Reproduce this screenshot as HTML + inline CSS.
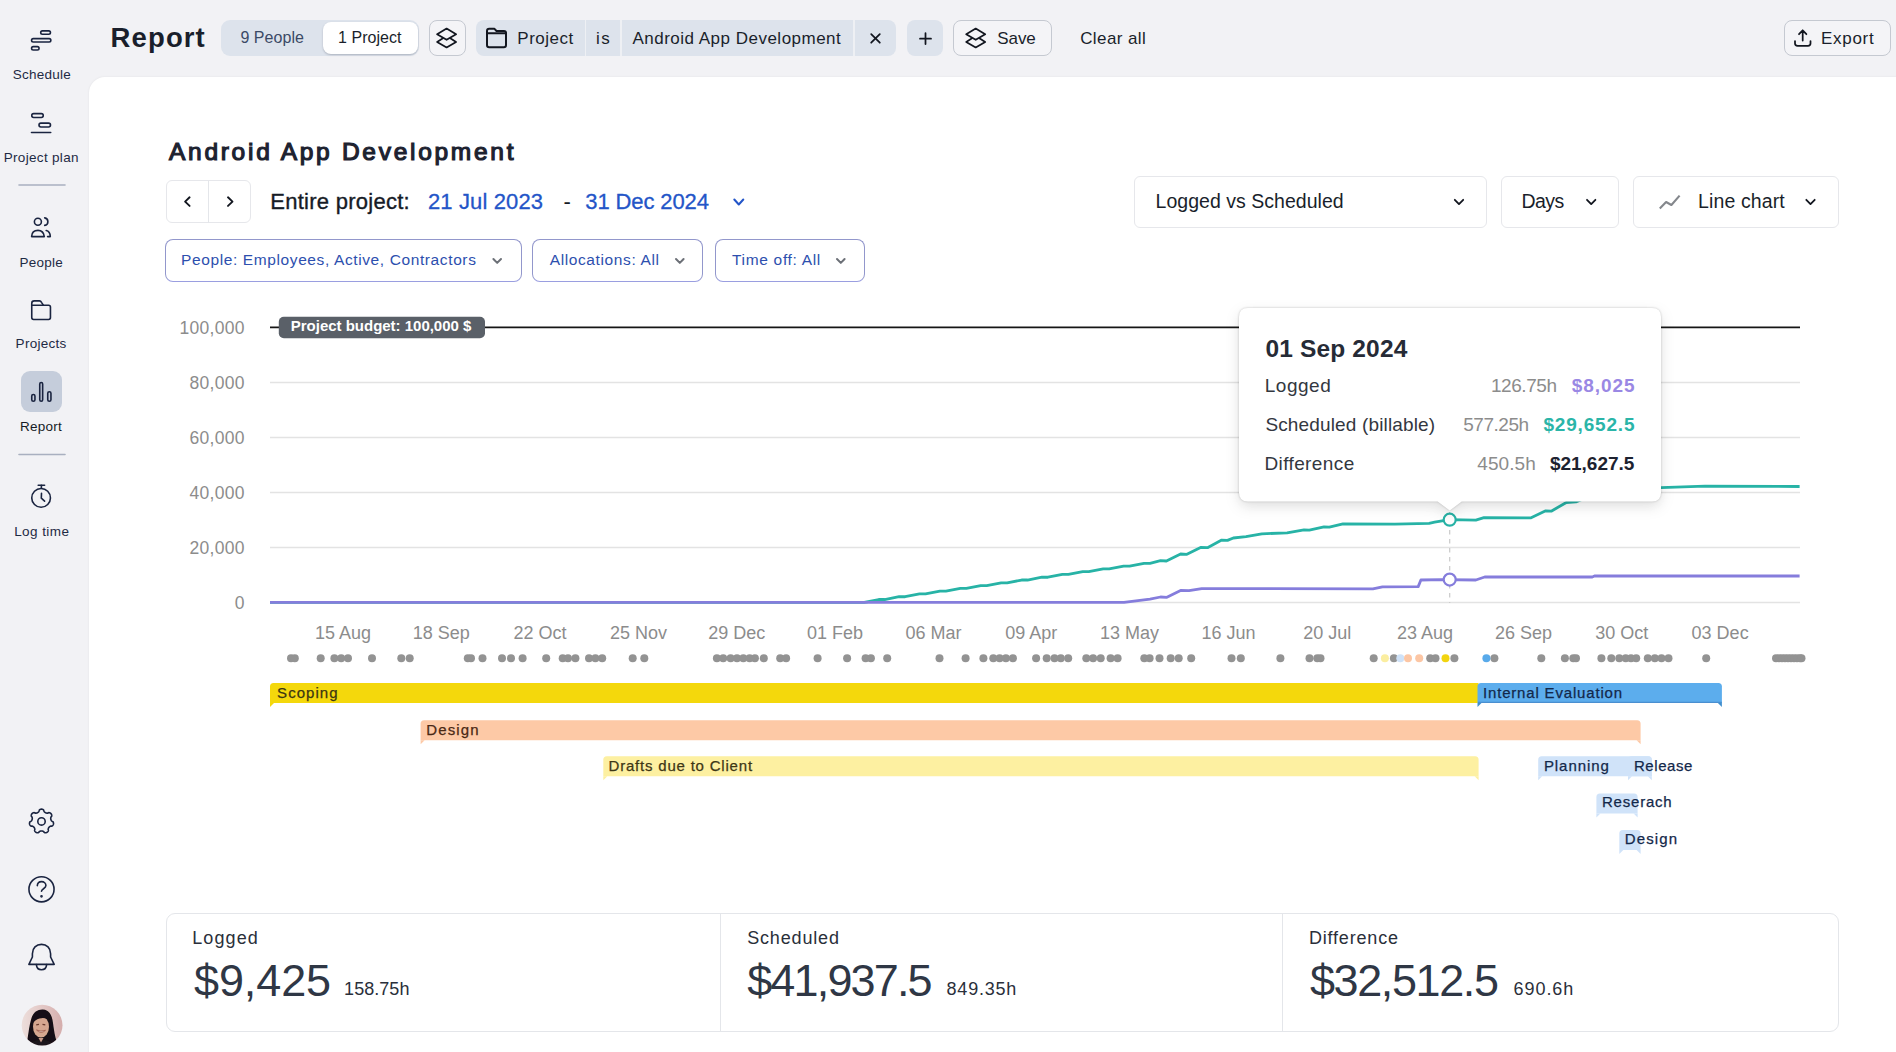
<!DOCTYPE html>
<html><head><meta charset="utf-8">
<style>
*{box-sizing:border-box;margin:0;padding:0}
html,body{width:1896px;height:1052px;overflow:hidden;background:#f2f2f5;font-family:"Liberation Sans",sans-serif;color:#1f2430}
.a{position:absolute}
.t{position:absolute;line-height:1;white-space:nowrap}
svg{position:absolute;overflow:visible}
#panel{position:absolute;left:88.5px;top:77px;width:1808px;height:976px;background:#fff;border-top-left-radius:16px;box-shadow:0 0 2.5px rgba(0,0,0,0.07)}
.box{position:absolute;border:1.2px solid #e6e7eb;border-radius:6px;background:#fff}
.fp{position:absolute;border:1.3px solid #9297cc;border-bottom-color:#9a9ee0;border-radius:8px;background:#fff;top:239px;height:42.5px}
</style></head><body>
<div id="panel"></div>

<!-- SIDEBAR ICONS -->
<div class="a" style="left:21.2px;top:371.4px;width:40.6px;height:41.1px;border-radius:9px;background:#c5cddb"></div>
<svg style="left:0;top:0" width="88" height="1052" fill="none" stroke="#1a2440" stroke-width="1.6" stroke-linecap="round" stroke-linejoin="round">
  <!-- schedule -->
  <rect x="40.7" y="30.85" width="9.75" height="3.4" rx="1.7"/>
  <rect x="31.55" y="38.65" width="19.3" height="3.4" rx="1.7"/>
  <rect x="31.55" y="46.65" width="7.5" height="3.4" rx="1.7"/>
  <!-- project plan -->
  <rect x="31.75" y="113.6" width="11.5" height="3.9" rx="1.9"/>
  <rect x="39" y="123.1" width="11.5" height="3.9" rx="1.9"/>
  <line x1="31.5" y1="132.5" x2="50.7" y2="132.5"/>
  <line x1="19" y1="185" x2="65" y2="185" stroke="#a9b0c0" stroke-width="1.6"/>
  <!-- people -->
  <circle cx="37.9" cy="221.7" r="3.5"/>
  <path d="M44.7 217.9 A3.8 3.8 0 0 1 44.7 225.4"/>
  <path d="M31.6 236.6 C31.8 232.5 34.5 230.4 38 230.4 C41.3 230.4 43.8 232.6 44.3 236.6 Z"/>
  <path d="M46.2 230.5 C48.8 231 50.2 233.2 50.3 236.6 L47.6 236.6"/>
  <!-- projects folder -->
  <path d="M31.75 303.4 L31.75 317.6 Q31.75 319.45 33.6 319.45 L48.6 319.45 Q50.45 319.45 50.45 317.6 L50.45 307.1 Q50.45 305.2 48.6 305.2 L43.3 305.2 L41.5 302.3 Q40.8 300.9 39.4 300.9 L34.2 300.9 Q31.75 300.9 31.75 303.4 Z"/>
  <line x1="31.75" y1="305.2" x2="43.3" y2="305.2"/>
  <!-- report bars -->
  <rect x="31.75" y="394.5" width="3.2" height="6.8" rx="1.6"/>
  <rect x="39.75" y="382.45" width="2.9" height="18.85" rx="1.45"/>
  <rect x="47.75" y="391.75" width="3.2" height="9.55" rx="1.6"/>
  <line x1="19" y1="454.5" x2="65" y2="454.5" stroke="#a9b0c0" stroke-width="1.6"/>
  <!-- log time -->
  <circle cx="41.1" cy="497.9" r="9.35"/>
  <line x1="38.2" y1="485.3" x2="44.6" y2="485.3"/>
  <line x1="41.4" y1="485.3" x2="41.4" y2="488.3"/>
  <path d="M41.5 493.3 L41.3 498.2 L44.6 501.2"/>
  <!-- gear -->
  <path d="M41.50 809.15 L41.71 809.16 L41.93 809.18 L42.14 809.22 L42.35 809.27 L42.56 809.34 L42.76 809.42 L42.96 809.52 L43.15 809.64 L43.34 809.77 L43.52 809.93 L43.69 810.12 L43.85 810.36 L43.92 810.92 L44.03 811.27 L44.15 811.49 L44.29 811.68 L44.42 811.84 L44.56 811.99 L44.69 812.13 L44.83 812.25 L44.97 812.37 L45.11 812.47 L45.25 812.57 L45.39 812.66 L45.54 812.74 L45.69 812.82 L45.84 812.88 L46.00 812.94 L46.16 812.99 L46.33 813.04 L46.50 813.08 L46.68 813.11 L46.87 813.14 L47.06 813.15 L47.27 813.16 L47.49 813.15 L47.73 813.13 L48.02 813.06 L48.53 812.72 L48.84 812.66 L49.10 812.66 L49.34 812.69 L49.57 812.74 L49.79 812.82 L50.00 812.90 L50.19 813.01 L50.38 813.12 L50.55 813.25 L50.72 813.38 L50.88 813.53 L51.02 813.69 L51.15 813.86 L51.27 814.04 L51.38 814.22 L51.48 814.41 L51.56 814.62 L51.63 814.82 L51.68 815.04 L51.72 815.26 L51.74 815.49 L51.74 815.73 L51.71 815.97 L51.65 816.23 L51.49 816.53 L51.06 816.94 L50.94 817.20 L50.86 817.43 L50.81 817.64 L50.77 817.84 L50.75 818.03 L50.73 818.22 L50.72 818.40 L50.72 818.58 L50.73 818.75 L50.75 818.92 L50.77 819.09 L50.81 819.25 L50.85 819.41 L50.89 819.57 L50.95 819.73 L51.01 819.89 L51.09 820.05 L51.17 820.21 L51.26 820.37 L51.37 820.54 L51.48 820.70 L51.62 820.87 L51.78 821.04 L51.97 821.22 L52.40 821.40 L52.82 821.60 L53.01 821.80 L53.15 822.01 L53.26 822.22 L53.35 822.44 L53.42 822.65 L53.47 822.87 L53.50 823.09 L53.52 823.30 L53.52 823.52 L53.51 823.73 L53.48 823.95 L53.44 824.16 L53.38 824.36 L53.31 824.56 L53.22 824.76 L53.12 824.95 L53.01 825.14 L52.88 825.32 L52.74 825.49 L52.58 825.65 L52.40 825.80 L52.20 825.94 L51.98 826.06 L51.70 826.16 L51.11 826.08 L50.78 826.13 L50.54 826.21 L50.33 826.29 L50.14 826.39 L49.97 826.49 L49.81 826.59 L49.66 826.70 L49.51 826.81 L49.38 826.92 L49.26 827.03 L49.14 827.16 L49.03 827.28 L48.92 827.41 L48.82 827.55 L48.73 827.69 L48.65 827.83 L48.56 827.99 L48.49 828.15 L48.42 828.32 L48.35 828.50 L48.29 828.69 L48.24 828.89 L48.20 829.11 L48.18 829.36 L48.19 829.66 L48.40 830.24 L48.39 830.54 L48.32 830.79 L48.23 831.02 L48.13 831.23 L48.01 831.42 L47.87 831.60 L47.73 831.77 L47.57 831.92 L47.41 832.06 L47.24 832.19 L47.06 832.31 L46.87 832.41 L46.68 832.50 L46.48 832.58 L46.27 832.64 L46.06 832.69 L45.85 832.72 L45.63 832.74 L45.40 832.74 L45.18 832.73 L44.95 832.69 L44.72 832.63 L44.49 832.55 L44.25 832.42 L43.98 832.16 L43.69 831.68 L43.47 831.52 L43.26 831.40 L43.07 831.30 L42.88 831.22 L42.70 831.16 L42.52 831.10 L42.34 831.05 L42.17 831.02 L42.00 830.99 L41.83 830.97 L41.67 830.95 L41.50 830.95 L41.33 830.95 L41.17 830.97 L41.00 830.99 L40.83 831.02 L40.66 831.05 L40.48 831.10 L40.30 831.16 L40.12 831.22 L39.93 831.30 L39.74 831.40 L39.53 831.52 L39.31 831.68 L39.02 832.16 L38.75 832.42 L38.51 832.55 L38.28 832.63 L38.05 832.69 L37.82 832.73 L37.60 832.74 L37.37 832.74 L37.15 832.72 L36.94 832.69 L36.73 832.64 L36.52 832.58 L36.32 832.50 L36.13 832.41 L35.94 832.31 L35.76 832.19 L35.59 832.06 L35.43 831.92 L35.27 831.77 L35.13 831.60 L34.99 831.42 L34.87 831.23 L34.77 831.02 L34.68 830.79 L34.61 830.54 L34.60 830.24 L34.81 829.66 L34.82 829.36 L34.80 829.11 L34.76 828.89 L34.71 828.69 L34.65 828.50 L34.58 828.32 L34.51 828.15 L34.44 827.99 L34.35 827.83 L34.27 827.69 L34.18 827.55 L34.08 827.41 L33.97 827.28 L33.86 827.16 L33.74 827.03 L33.62 826.92 L33.49 826.81 L33.34 826.70 L33.19 826.59 L33.03 826.49 L32.86 826.39 L32.67 826.29 L32.46 826.21 L32.22 826.13 L31.89 826.08 L31.30 826.16 L31.02 826.06 L30.80 825.94 L30.60 825.80 L30.42 825.65 L30.26 825.49 L30.12 825.32 L29.99 825.14 L29.88 824.95 L29.78 824.76 L29.69 824.56 L29.62 824.36 L29.56 824.16 L29.52 823.95 L29.49 823.73 L29.48 823.52 L29.48 823.30 L29.50 823.09 L29.53 822.87 L29.58 822.65 L29.65 822.44 L29.74 822.22 L29.85 822.01 L29.99 821.80 L30.18 821.60 L30.60 821.40 L31.03 821.22 L31.22 821.04 L31.38 820.87 L31.52 820.70 L31.63 820.54 L31.74 820.37 L31.83 820.21 L31.91 820.05 L31.99 819.89 L32.05 819.73 L32.11 819.57 L32.15 819.41 L32.19 819.25 L32.23 819.09 L32.25 818.92 L32.27 818.75 L32.28 818.58 L32.28 818.40 L32.27 818.22 L32.25 818.03 L32.23 817.84 L32.19 817.64 L32.14 817.43 L32.06 817.20 L31.94 816.94 L31.51 816.53 L31.35 816.23 L31.29 815.97 L31.26 815.73 L31.26 815.49 L31.28 815.26 L31.32 815.04 L31.37 814.82 L31.44 814.62 L31.52 814.41 L31.62 814.22 L31.73 814.04 L31.85 813.86 L31.98 813.69 L32.12 813.53 L32.28 813.38 L32.45 813.25 L32.62 813.12 L32.81 813.01 L33.00 812.90 L33.21 812.82 L33.43 812.74 L33.66 812.69 L33.90 812.66 L34.16 812.66 L34.47 812.72 L34.98 813.06 L35.27 813.13 L35.51 813.15 L35.73 813.16 L35.94 813.15 L36.13 813.14 L36.32 813.11 L36.50 813.08 L36.67 813.04 L36.84 812.99 L37.00 812.94 L37.16 812.88 L37.31 812.82 L37.46 812.74 L37.61 812.66 L37.75 812.57 L37.89 812.47 L38.03 812.37 L38.17 812.25 L38.31 812.13 L38.44 811.99 L38.58 811.84 L38.71 811.68 L38.85 811.49 L38.97 811.27 L39.08 810.92 L39.15 810.36 L39.31 810.12 L39.48 809.93 L39.66 809.77 L39.85 809.64 L40.04 809.52 L40.24 809.42 L40.44 809.34 L40.65 809.27 L40.86 809.22 L41.07 809.18 L41.29 809.16 L41.50 809.15 Z"/>
  <circle cx="41.5" cy="821.4" r="3.7"/>
  <!-- help -->
  <circle cx="41.5" cy="889.3" r="12.55"/>
  <path d="M37.3 885.6 C37.5 883 39.3 881.6 41.6 881.6 C44.1 881.6 45.9 883.3 45.9 885.5 C45.9 888.5 41.5 888.9 41.5 891.3"/>
  <circle cx="41.5" cy="896.3" r="0.55" fill="#1a2440"/>
  <!-- bell -->
  <path d="M28.9 964.4 L32.4 957 L32.4 953.7 C32.4 948 36.3 944.4 41.5 944.4 C46.7 944.4 50.6 948 50.6 953.7 L50.6 957 L54.2 964.4 Z"/>
  <path d="M36.4 964.6 C36.6 967.9 38.8 969.7 41.5 969.7 C44.2 969.7 46.4 967.9 46.6 964.6"/>
</svg>
<!-- avatar -->
<svg style="left:20.7px;top:1004.3px" width="42" height="42" viewBox="0 0 42 42">
  <defs><clipPath id="av"><circle cx="21.1" cy="21.2" r="20.4"/></clipPath>
  <linearGradient id="avbg" x1="0" y1="0" x2="1" y2="0"><stop offset="0" stop-color="#eddfdc"/><stop offset="0.55" stop-color="#e2c6c4"/><stop offset="1" stop-color="#d4acab"/></linearGradient>
  <filter id="avb"><feGaussianBlur stdDeviation="0.45"/></filter></defs>
  <g clip-path="url(#av)">
    <rect width="42" height="42" fill="url(#avbg)"/>
    <g filter="url(#avb)">
    <path d="M5.5 42 C7 33 8 22 10.5 14 C12.5 8 17 5.2 22 5.5 C27.5 6 30.5 10 31.5 16 C33 25 33.5 33 37.5 42 Z" fill="#141013"/>
    <ellipse cx="20" cy="22.8" rx="8" ry="10.8" fill="#d6a690"/>
    <path d="M11.5 19.5 C12.5 12.5 16.5 9.5 21 9.8 C25.5 10.2 28.3 13 28.8 17.5 C26.5 14.5 23 13.2 18.5 14.6 C15.5 15.6 13 17.2 11.5 19.5 Z" fill="#141013"/>
    <path d="M28 15 C29.5 22 29 30 27 36 L32 40 C31 32 30.5 22 28 15 Z" fill="#141013"/>
    <path d="M15.2 20.8 L18 20.3 M21.5 20.3 L24.3 20.8" stroke="#6a3a2e" stroke-width="1.2"/>
    <path d="M15.5 26 Q20 30.5 24.5 26.3 Q20 28 15.5 26 Z" fill="#f2e4de" stroke="#9a5446" stroke-width="0.8"/>
    <path d="M8 42 C11 37.5 15 36 20 36 C26 36 30 37.5 34 42 Z" fill="#1d171a"/>
    <path d="M17.5 34 L20 38.5 L22.5 34 Z" fill="#c89888"/>
    </g>
  </g>
</svg>

<!-- HEADER SHAPES -->
<div class="a" style="left:221.2px;top:20.3px;width:198px;height:35.5px;border-radius:9px;background:#dde3ec"></div>
<div class="a" style="left:322.7px;top:22px;width:95.5px;height:32px;border-radius:8px;background:#fff;box-shadow:0 1px 2px rgba(30,40,60,0.25)"></div>
<div class="a" style="left:429px;top:20.3px;width:36.5px;height:35.5px;border-radius:8px;border:1px solid #c5c9d1;background:#f4f4f7"></div>
<svg style="left:0;top:0" width="1896" height="80" fill="none" stroke="#12161f" stroke-width="2" stroke-linejoin="round">
  <g transform="translate(446.6,0)" stroke-width="1.75">
    <path d="M0 28.6 L9.5 34.2 L0 39.8 L-9.5 34.2 Z"/>
    <path d="M-3.3 38.1 L-9.5 41.9 L0 47.4 L9.5 41.9 L3.3 38.1"/>
  </g>
</svg>
<!-- filter chip -->
<div class="a" style="left:476.2px;top:20.3px;width:420px;height:35.4px;border-radius:8px;background:#dde3ec"></div>
<div class="a" style="left:584.6px;top:20.3px;width:1.8px;height:35.4px;background:#eef0f4"></div>
<div class="a" style="left:620.2px;top:20.3px;width:1.8px;height:35.4px;background:#eef0f4"></div>
<div class="a" style="left:853px;top:20.3px;width:1.8px;height:35.4px;background:#eef0f4"></div>
<svg style="left:0;top:0" width="1896" height="80" fill="none" stroke="#12161f" stroke-width="2" stroke-linejoin="round" stroke-linecap="round">
  <!-- folder -->
  <path d="M487 31 Q487 28.8 489.2 28.8 L494.5 28.8 L496.5 31 L504 31 Q506 31 506 33 L506 45 Q506 47.2 503.8 47.2 L489.2 47.2 Q487 47.2 487 45 Z"/>
  <line x1="487" y1="33.2" x2="506" y2="33.2"/>
  <!-- x -->
  <path d="M871.2 34.1 L879.8 42.7 M879.8 34.1 L871.2 42.7" stroke-width="1.75"/>
  </svg>
<div class="a" style="left:907.2px;top:20.3px;width:36px;height:35.4px;border-radius:8px;background:#dde3ec"></div>
<svg style="left:0;top:0" width="1896" height="80" fill="none" stroke="#12161f" stroke-width="2" stroke-linejoin="round" stroke-linecap="round">
  <path d="M925.5 33.2 L925.5 44.1 M920 38.65 L931 38.65" stroke-width="1.75"/>
</svg>
<div class="a" style="left:953.3px;top:20.3px;width:98.5px;height:35.5px;border-radius:8px;border:1px solid #c5c9d1;background:#f4f4f7"></div>
<svg style="left:0;top:0" width="1896" height="80" fill="none" stroke="#12161f" stroke-width="2" stroke-linejoin="round">
  <g transform="translate(975.7,0)" stroke-width="1.75">
    <path d="M0 28.6 L9.5 34.2 L0 39.8 L-9.5 34.2 Z"/>
    <path d="M-3.3 38.1 L-9.5 41.9 L0 47.4 L9.5 41.9 L3.3 38.1"/>
  </g>
</svg>
<!-- export -->
<div class="a" style="left:1784.2px;top:20.3px;width:106.5px;height:35.5px;border-radius:8px;border:1px solid #c5c9d1;background:#f4f4f7"></div>
<svg style="left:0;top:0" width="1896" height="80" fill="none" stroke="#12161f" stroke-width="2" stroke-linejoin="round" stroke-linecap="round">
  <path d="M1802.7 30.3 L1802.7 40.6 M1799 34.2 L1802.7 30.3 L1806.4 34.2" stroke-width="1.75"/>
  <path d="M1795 41 L1795 43.6 Q1795 45.8 1797.6 45.8 L1808 45.8 Q1810.5 45.8 1810.5 43.6 L1810.5 41" stroke-width="1.75"/>
</svg>

<!-- MAIN CONTROLS -->
<div class="box" style="left:166.3px;top:180px;width:85.2px;height:43.3px"></div>
<div class="a" style="left:208px;top:180.5px;width:1.2px;height:42.5px;background:#e4e6ea"></div>
<svg style="left:0;top:0" width="1896" height="300" fill="none" stroke="#12161f" stroke-width="2" stroke-linejoin="round" stroke-linecap="round">
  <path d="M189.6 197.3 L185.1 201.6 L189.6 205.9" stroke-width="1.9"/>
  <path d="M228 197.3 L232.5 201.6 L228 205.9" stroke-width="1.9"/>
  <path d="M734.3 199.5 L738.8 204.5 L743.3 199.5" stroke="#2355c8"/>
</svg>
<div class="box" style="left:1134.3px;top:175.5px;width:352.5px;height:52px"></div>
<div class="box" style="left:1501px;top:175.5px;width:118.3px;height:52px"></div>
<div class="box" style="left:1633px;top:175.5px;width:206px;height:52px"></div>
<svg style="left:0;top:0" width="1896" height="300" fill="none" stroke="#12161f" stroke-width="2" stroke-linejoin="round" stroke-linecap="round">
  <path d="M1454.8 199.8 L1459 204.1 L1463.2 199.8" stroke-width="1.8"/>
  <path d="M1587 199.8 L1591.2 204.1 L1595.4 199.8" stroke-width="1.8"/>
  <path d="M1806.3 199.8 L1810.5 204.1 L1814.7 199.8" stroke-width="1.8"/>
  <path d="M1659.8 208.5 L1666.1 202 L1671.4 205 L1679.6 195.6" stroke="#84878c" stroke-width="2.1" stroke-linecap="butt"/>
</svg>
<div class="fp" style="left:165.4px;width:356.4px"></div>
<div class="fp" style="left:532.4px;width:171px"></div>
<div class="fp" style="left:714.8px;width:150px"></div>
<svg style="left:0;top:0" width="1896" height="300" fill="none" stroke="#6c7077" stroke-width="2" stroke-linejoin="round" stroke-linecap="round">
  <path d="M493.4 259 L497.2 262.9 L501 259"/>
  <path d="M676 259 L679.8 262.9 L683.6 259"/>
  <path d="M837 259 L840.8 262.9 L844.6 259"/>
</svg>

<svg style="left:0;top:0" width="1896" height="900">
<line x1="270" y1="382.5" x2="1800" y2="382.5" stroke="#e3e3e3" stroke-width="1.5"/>
<line x1="270" y1="437.5" x2="1800" y2="437.5" stroke="#e3e3e3" stroke-width="1.5"/>
<line x1="270" y1="492.5" x2="1800" y2="492.5" stroke="#e3e3e3" stroke-width="1.5"/>
<line x1="270" y1="547.5" x2="1800" y2="547.5" stroke="#e3e3e3" stroke-width="1.5"/>
<line x1="270" y1="602.5" x2="1800" y2="602.5" stroke="#e3e3e3" stroke-width="1.5"/>
<line x1="270" y1="327.3" x2="1800" y2="327.3" stroke="#161616" stroke-width="1.8"/>
<rect x="278.8" y="316.8" width="206.2" height="21.5" rx="5" fill="#5a6068"/>
<line x1="1449.7" y1="512" x2="1449.7" y2="603" stroke="#c9c9c9" stroke-width="1.2" stroke-dasharray="4.5 4.5"/>
<polyline points="270,602.3 864.3,602.3 878.71,599.51 884.71,599.51 899.11,596.73 905.11,596.73 919.52,593.94 925.52,593.94 939.93,591.16 945.93,591.16 960.34,588.37 966.34,588.37 980.74,585.59 986.74,585.59 1001.15,582.8 1007.15,582.8 1021.56,580.01 1027.56,580.01 1041.96,577.23 1047.96,577.23 1062.37,574.44 1068.37,574.44 1082.78,571.66 1088.78,571.66 1103.19,568.87 1109.19,568.87 1123.59,566.09 1129.59,566.09 1144.0,563.3 1150.0,563.3 1160.5,560.7 1166.4,561 1180.6,554 1186.9,554.3 1200.6,547.5 1207.5,547.7 1221.7,540.1 1227.5,540.4 1233.3,538 1246,536.7 1261.8,533.8 1287.1,532.9 1304,529.9 1309.3,530.1 1324,526.9 1329.3,527.2 1343,523.8 1394.9,524.1 1429.1,523.4 1434.6,522.2 1449.7,519.7 1475.8,520.1 1484,517.6 1530.6,517.9 1545.7,510.8 1551.2,511.2 1566.3,502.5 1575.9,501.9 1600,492 1661.2,487.6 1705,486.1 1799.6,486.5" fill="none" stroke="#27b3a6" stroke-width="2.8" stroke-linejoin="round"/>
<polyline points="270,602.3 1124,602.3 1150,599.2 1160.5,597 1166.9,597.3 1180.6,590.5 1189,590.7 1201.7,588.6 1372.9,588.9 1382.5,586.9 1418.2,586.6 1420.9,580 1441.5,579.6 1475.8,580 1484.7,577 1592.3,577 1595,575.8 1799.6,576" fill="none" stroke="#857ddc" stroke-width="2.8" stroke-linejoin="round"/>
<circle cx="1449.7" cy="519.7" r="6" fill="#fff" stroke="#27b3a6" stroke-width="2.2"/>
<circle cx="1449.7" cy="579.6" r="6" fill="#fff" stroke="#857ddc" stroke-width="2.2"/>
<circle cx="291" cy="658.3" r="4" fill="#939393"/>
<circle cx="294.8" cy="658.3" r="4" fill="#939393"/>
<circle cx="320.7" cy="658.3" r="4" fill="#939393"/>
<circle cx="334.4" cy="658.3" r="4" fill="#939393"/>
<circle cx="341.2" cy="658.3" r="4" fill="#939393"/>
<circle cx="348" cy="658.3" r="4" fill="#939393"/>
<circle cx="372" cy="658.3" r="4" fill="#939393"/>
<circle cx="401.3" cy="658.3" r="4" fill="#939393"/>
<circle cx="409.7" cy="658.3" r="4" fill="#939393"/>
<circle cx="467.8" cy="658.3" r="4" fill="#939393"/>
<circle cx="471" cy="658.3" r="4" fill="#939393"/>
<circle cx="482.5" cy="658.3" r="4" fill="#939393"/>
<circle cx="502" cy="658.3" r="4" fill="#939393"/>
<circle cx="511" cy="658.3" r="4" fill="#939393"/>
<circle cx="522.6" cy="658.3" r="4" fill="#939393"/>
<circle cx="546.2" cy="658.3" r="4" fill="#939393"/>
<circle cx="562.7" cy="658.3" r="4" fill="#939393"/>
<circle cx="568" cy="658.3" r="4" fill="#939393"/>
<circle cx="575.4" cy="658.3" r="4" fill="#939393"/>
<circle cx="589" cy="658.3" r="4" fill="#939393"/>
<circle cx="595.4" cy="658.3" r="4" fill="#939393"/>
<circle cx="602.2" cy="658.3" r="4" fill="#939393"/>
<circle cx="632.7" cy="658.3" r="4" fill="#939393"/>
<circle cx="644.3" cy="658.3" r="4" fill="#939393"/>
<circle cx="716.9" cy="658.3" r="4" fill="#939393"/>
<circle cx="723.2" cy="658.3" r="4" fill="#939393"/>
<circle cx="730.6" cy="658.3" r="4" fill="#939393"/>
<circle cx="737" cy="658.3" r="4" fill="#939393"/>
<circle cx="743.3" cy="658.3" r="4" fill="#939393"/>
<circle cx="749.6" cy="658.3" r="4" fill="#939393"/>
<circle cx="754.9" cy="658.3" r="4" fill="#939393"/>
<circle cx="763.8" cy="658.3" r="4" fill="#939393"/>
<circle cx="780.2" cy="658.3" r="4" fill="#939393"/>
<circle cx="786.1" cy="658.3" r="4" fill="#939393"/>
<circle cx="817.6" cy="658.3" r="4" fill="#939393"/>
<circle cx="847.1" cy="658.3" r="4" fill="#939393"/>
<circle cx="865.6" cy="658.3" r="4" fill="#939393"/>
<circle cx="870.9" cy="658.3" r="4" fill="#939393"/>
<circle cx="887.2" cy="658.3" r="4" fill="#939393"/>
<circle cx="939.5" cy="658.3" r="4" fill="#939393"/>
<circle cx="965.6" cy="658.3" r="4" fill="#939393"/>
<circle cx="983.4" cy="658.3" r="4" fill="#939393"/>
<circle cx="993.3" cy="658.3" r="4" fill="#939393"/>
<circle cx="999.6" cy="658.3" r="4" fill="#939393"/>
<circle cx="1005.9" cy="658.3" r="4" fill="#939393"/>
<circle cx="1012.9" cy="658.3" r="4" fill="#939393"/>
<circle cx="1036.1" cy="658.3" r="4" fill="#939393"/>
<circle cx="1046.7" cy="658.3" r="4" fill="#939393"/>
<circle cx="1054.5" cy="658.3" r="4" fill="#939393"/>
<circle cx="1060.8" cy="658.3" r="4" fill="#939393"/>
<circle cx="1068.2" cy="658.3" r="4" fill="#939393"/>
<circle cx="1086.3" cy="658.3" r="4" fill="#939393"/>
<circle cx="1093.1" cy="658.3" r="4" fill="#939393"/>
<circle cx="1100.7" cy="658.3" r="4" fill="#939393"/>
<circle cx="1110.6" cy="658.3" r="4" fill="#939393"/>
<circle cx="1117.6" cy="658.3" r="4" fill="#939393"/>
<circle cx="1144.3" cy="658.3" r="4" fill="#939393"/>
<circle cx="1149.6" cy="658.3" r="4" fill="#939393"/>
<circle cx="1159.5" cy="658.3" r="4" fill="#939393"/>
<circle cx="1170.7" cy="658.3" r="4" fill="#939393"/>
<circle cx="1178.7" cy="658.3" r="4" fill="#939393"/>
<circle cx="1191.2" cy="658.3" r="4" fill="#939393"/>
<circle cx="1231.5" cy="658.3" r="4" fill="#939393"/>
<circle cx="1240.8" cy="658.3" r="4" fill="#939393"/>
<circle cx="1280.4" cy="658.3" r="4" fill="#939393"/>
<circle cx="1309.5" cy="658.3" r="4" fill="#939393"/>
<circle cx="1317.3" cy="658.3" r="4" fill="#939393"/>
<circle cx="1320.5" cy="658.3" r="4" fill="#939393"/>
<circle cx="1373.7" cy="658.3" r="4" fill="#939393"/>
<circle cx="1393.9" cy="658.3" r="4" fill="#939393"/>
<circle cx="1430.2" cy="658.3" r="4" fill="#939393"/>
<circle cx="1435.5" cy="658.3" r="4" fill="#939393"/>
<circle cx="1454.4" cy="658.3" r="4" fill="#939393"/>
<circle cx="1494.4" cy="658.3" r="4" fill="#939393"/>
<circle cx="1541.3" cy="658.3" r="4" fill="#939393"/>
<circle cx="1564.9" cy="658.3" r="4" fill="#939393"/>
<circle cx="1573.3" cy="658.3" r="4" fill="#939393"/>
<circle cx="1576" cy="658.3" r="4" fill="#939393"/>
<circle cx="1601.4" cy="658.3" r="4" fill="#939393"/>
<circle cx="1611.3" cy="658.3" r="4" fill="#939393"/>
<circle cx="1619.3" cy="658.3" r="4" fill="#939393"/>
<circle cx="1625.7" cy="658.3" r="4" fill="#939393"/>
<circle cx="1631" cy="658.3" r="4" fill="#939393"/>
<circle cx="1636.2" cy="658.3" r="4" fill="#939393"/>
<circle cx="1647.8" cy="658.3" r="4" fill="#939393"/>
<circle cx="1654.8" cy="658.3" r="4" fill="#939393"/>
<circle cx="1661.5" cy="658.3" r="4" fill="#939393"/>
<circle cx="1668.5" cy="658.3" r="4" fill="#939393"/>
<circle cx="1706.2" cy="658.3" r="4" fill="#939393"/>
<circle cx="1776" cy="658.3" r="4" fill="#939393"/>
<circle cx="1779" cy="658.3" r="4" fill="#939393"/>
<circle cx="1782" cy="658.3" r="4" fill="#939393"/>
<circle cx="1785" cy="658.3" r="4" fill="#939393"/>
<circle cx="1788" cy="658.3" r="4" fill="#939393"/>
<circle cx="1791" cy="658.3" r="4" fill="#939393"/>
<circle cx="1794" cy="658.3" r="4" fill="#939393"/>
<circle cx="1797" cy="658.3" r="4" fill="#939393"/>
<circle cx="1800" cy="658.3" r="4" fill="#939393"/>
<circle cx="1801.5" cy="658.3" r="4" fill="#939393"/>
<circle cx="1384.9" cy="658.3" r="4" fill="#fbeea0"/>
<circle cx="1400.3" cy="658.3" r="4" fill="#cfe2f8"/>
<circle cx="1408" cy="658.3" r="4" fill="#fcc6a4"/>
<circle cx="1419.2" cy="658.3" r="4" fill="#fcc6a4"/>
<circle cx="1445.5" cy="658.3" r="4" fill="#f2d40f"/>
<circle cx="1486.4" cy="658.3" r="4" fill="#58aaea"/>
<path d="M270 703 L270 686.5 Q270 683 273.5 683 L1478.5 683 Q1478.5 683 1478.5 683 L1478.5 703 Z" fill="#f4d80c"/><path d="M270 703 L274 703 L270 707 Z" fill="#f4d80c"/>
<path d="M1477.5 703 L1477.5 686.5 Q1477.5 683 1481.0 683 L1718.4 683 Q1721.9 683 1721.9 686.5 L1721.9 703 Z" fill="#5caded"/><path d="M1477.5 703 L1481.5 703 L1477.5 707 Z" fill="#3f8fce"/><path d="M1721.9 703 L1717.9 703 L1721.9 707 Z" fill="#3f8fce"/>
<line x1="1478" y1="702.4" x2="1721.9" y2="702.4" stroke="#4a8fd0" stroke-width="1.2"/>
<path d="M420.6 740.3 L420.6 723.8 Q420.6 720.3 424.1 720.3 L1637.1 720.3 Q1640.6 720.3 1640.6 723.8 L1640.6 740.3 Z" fill="#fdc9a6"/><path d="M420.6 740.3 L424.6 740.3 L420.6 744.3 Z" fill="#fdc9a6"/><path d="M1640.6 740.3 L1636.6 740.3 L1640.6 744.3 Z" fill="#fdc9a6"/>
<path d="M603.3 776.3 L603.3 759.8 Q603.3 756.3 606.8 756.3 L1475.1 756.3 Q1478.6 756.3 1478.6 759.8 L1478.6 776.3 Z" fill="#fdf0a1"/><path d="M603.3 776.3 L607.3 776.3 L603.3 780.3 Z" fill="#fdf0a1"/><path d="M1478.6 776.3 L1474.6 776.3 L1478.6 780.3 Z" fill="#fdf0a1"/>
<path d="M1538.2 776.3 L1538.2 759.8 Q1538.2 756.3 1541.7 756.3 L1648.3 756.3 Q1651.8 756.3 1651.8 759.8 L1651.8 776.3 Z" fill="#d0e3f9"/><path d="M1538.2 776.3 L1542.2 776.3 L1538.2 780.3 Z" fill="#d0e3f9"/>
<path d="M1628 776.3 L1628 759.8 Q1628 756.3 1631.5 756.3 L1648.3 756.3 Q1651.8 756.3 1651.8 759.8 L1651.8 776.3 Z" fill="#d0e3f9"/><path d="M1628 776.3 L1632 776.3 L1628 780.3 Z" fill="#d0e3f9"/><path d="M1651.8 776.3 L1647.8 776.3 L1651.8 780.3 Z" fill="#d0e3f9"/>
<path d="M1596.4 813.4 L1596.4 796.9 Q1596.4 793.4 1599.9 793.4 L1634.1 793.4 Q1637.6 793.4 1637.6 796.9 L1637.6 813.4 Z" fill="#d0e3f9"/><path d="M1596.4 813.4 L1600.4 813.4 L1596.4 817.4 Z" fill="#d0e3f9"/><path d="M1637.6 813.4 L1633.6 813.4 L1637.6 817.4 Z" fill="#d0e3f9"/>
<path d="M1619.3 849.9 L1619.3 833.4 Q1619.3 829.9 1622.8 829.9 L1637.1 829.9 Q1640.6 829.9 1640.6 833.4 L1640.6 849.9 Z" fill="#d0e3f9"/><path d="M1619.3 849.9 L1623.3 849.9 L1619.3 853.9 Z" fill="#d0e3f9"/><path d="M1640.6 849.9 L1636.6 849.9 L1640.6 853.9 Z" fill="#d0e3f9"/>
</svg>
<svg style="left:0;top:0;filter:drop-shadow(0 5px 7px rgba(0,0,0,0.11)) drop-shadow(0 0 1px rgba(0,0,0,0.22))" width="1896" height="900"><path d="M1248 308 L1652 308 Q1661 308 1661 317 L1661 492.5 Q1661 501.5 1652 501.5 L1461.7 501.5 L1449.7 510.5 L1437.7 501.5 L1248 501.5 Q1239 501.5 1239 492.5 L1239 317 Q1239 308 1248 308 Z" fill="#fff"/></svg>

<!-- STATS -->
<div class="a" style="left:165.5px;top:912.9px;width:1673.5px;height:118.7px;border:1px solid #e4e6ea;border-radius:9px;background:#fff"></div>
<div class="a" style="left:719.6px;top:913.5px;width:1px;height:117.5px;background:#e4e6ea"></div>
<div class="a" style="left:1282.1px;top:913.5px;width:1px;height:117.5px;background:#e4e6ea"></div>

<div class="t" style="left:12.70px;top:68px;font-size:13.5px;color:#1e2a44;letter-spacing:0.259px;">Schedule</div>
<div class="t" style="left:3.75px;top:151px;font-size:13.5px;color:#1e2a44;letter-spacing:0.311px;">Project plan</div>
<div class="t" style="left:19.50px;top:256px;font-size:13.5px;color:#1e2a44;letter-spacing:0.234px;">People</div>
<div class="t" style="left:15.60px;top:337px;font-size:13.5px;color:#1e2a44;letter-spacing:0.283px;">Projects</div>
<div class="t" style="left:20.00px;top:420px;font-size:13.5px;color:#161b26;letter-spacing:0.246px;">Report</div>
<div class="t" style="left:14.20px;top:525px;font-size:13.5px;color:#1e2a44;letter-spacing:0.418px;">Log time</div>
<div class="t" style="left:110.60px;top:24px;font-size:27.5px;color:#1a1f2b;font-weight:bold;letter-spacing:1.110px;">Report</div>
<div class="t" style="left:240.40px;top:30px;font-size:16px;color:#3b4a66;letter-spacing:0.048px;">9 People</div>
<div class="t" style="left:338.00px;top:30px;font-size:16px;color:#1a1f2b;letter-spacing:0.038px;">1 Project</div>
<div class="t" style="left:517.30px;top:30px;font-size:17px;color:#1a1f2b;letter-spacing:0.502px;">Project</div>
<div class="t" style="left:595.90px;top:30px;font-size:17px;color:#1a1f2b;letter-spacing:1.523px;">is</div>
<div class="t" style="left:632.50px;top:30px;font-size:17px;color:#1a1f2b;letter-spacing:0.489px;">Android App Development</div>
<div class="t" style="left:997.30px;top:30px;font-size:17px;color:#1a1f2b;letter-spacing:-0.098px;">Save</div>
<div class="t" style="left:1080.20px;top:30px;font-size:17px;color:#1a1f2b;letter-spacing:0.403px;">Clear all</div>
<div class="t" style="left:1821.00px;top:30px;font-size:17px;color:#1a1f2b;letter-spacing:0.718px;">Export</div>
<div class="t" style="left:169.00px;top:140px;font-size:24.5px;color:#1d2230;letter-spacing:2.718px;-webkit-text-stroke:1.2px #1d2230;">Android App Development</div>
<div class="t" style="left:270.30px;top:191px;font-size:22px;color:#161b26;letter-spacing:0.263px;-webkit-text-stroke:0.35px #161b26;">Entire project:</div>
<div class="t" style="left:428.00px;top:191px;font-size:22px;color:#2355c8;letter-spacing:0.128px;-webkit-text-stroke:0.3px #2355c8;">21 Jul 2023</div>
<div class="t" style="left:563.50px;top:191px;font-size:22px;color:#161b26;">-</div>
<div class="t" style="left:585.30px;top:191px;font-size:22px;color:#2355c8;letter-spacing:-0.112px;-webkit-text-stroke:0.3px #2355c8;">31 Dec 2024</div>
<div class="t" style="left:1155.50px;top:192px;font-size:19.5px;color:#1a1f2b;letter-spacing:0.032px;">Logged vs Scheduled</div>
<div class="t" style="left:1521.50px;top:192px;font-size:19.5px;color:#1a1f2b;letter-spacing:-0.559px;">Days</div>
<div class="t" style="left:1698.00px;top:192px;font-size:19.5px;color:#1a1f2b;letter-spacing:0.120px;">Line chart</div>
<div class="t" style="left:181.00px;top:252px;font-size:15.5px;color:#2d4fae;letter-spacing:0.612px;">People: Employees, Active, Contractors</div>
<div class="t" style="left:549.70px;top:252px;font-size:15.5px;color:#2d4fae;letter-spacing:0.617px;">Allocations: All</div>
<div class="t" style="left:732.00px;top:252px;font-size:15.5px;color:#2d4fae;letter-spacing:0.681px;">Time off: All</div>
<div class="t" style="left:179.40px;top:320px;font-size:17.5px;color:#8c8c8c;letter-spacing:0.312px;">100,000</div>
<div class="t" style="left:189.40px;top:375px;font-size:17.5px;color:#8c8c8c;letter-spacing:0.321px;">80,000</div>
<div class="t" style="left:189.40px;top:430px;font-size:17.5px;color:#8c8c8c;letter-spacing:0.321px;">60,000</div>
<div class="t" style="left:189.40px;top:485px;font-size:17.5px;color:#8c8c8c;letter-spacing:0.321px;">40,000</div>
<div class="t" style="left:189.40px;top:540px;font-size:17.5px;color:#8c8c8c;letter-spacing:0.321px;">20,000</div>
<div class="t" style="left:234.80px;top:595px;font-size:17.5px;color:#8c8c8c;">0</div>
<div class="t" style="left:290.80px;top:318px;font-size:15px;color:#ffffff;font-weight:bold;letter-spacing:-0.015px;">Project budget: 100,000 $</div>
<div class="t" style="left:314.89px;top:624px;font-size:18px;color:#8c8c8c;">15 Aug</div>
<div class="t" style="left:412.72px;top:624px;font-size:18px;color:#8c8c8c;">18 Sep</div>
<div class="t" style="left:513.57px;top:624px;font-size:18px;color:#8c8c8c;">22 Oct</div>
<div class="t" style="left:609.90px;top:624px;font-size:18px;color:#8c8c8c;">25 Nov</div>
<div class="t" style="left:708.24px;top:624px;font-size:18px;color:#8c8c8c;">29 Dec</div>
<div class="t" style="left:807.07px;top:624px;font-size:18px;color:#8c8c8c;">01 Feb</div>
<div class="t" style="left:905.41px;top:624px;font-size:18px;color:#8c8c8c;">06 Mar</div>
<div class="t" style="left:1005.24px;top:624px;font-size:18px;color:#8c8c8c;">09 Apr</div>
<div class="t" style="left:1100.08px;top:624px;font-size:18px;color:#8c8c8c;">13 May</div>
<div class="t" style="left:1201.42px;top:624px;font-size:18px;color:#8c8c8c;">16 Jun</div>
<div class="t" style="left:1303.25px;top:624px;font-size:18px;color:#8c8c8c;">20 Jul</div>
<div class="t" style="left:1397.09px;top:624px;font-size:18px;color:#8c8c8c;">23 Aug</div>
<div class="t" style="left:1494.92px;top:624px;font-size:18px;color:#8c8c8c;">26 Sep</div>
<div class="t" style="left:1595.27px;top:624px;font-size:18px;color:#8c8c8c;">30 Oct</div>
<div class="t" style="left:1691.60px;top:624px;font-size:18px;color:#8c8c8c;">03 Dec</div>
<div class="t" style="left:1265.40px;top:337px;font-size:24.5px;color:#262b36;font-weight:bold;letter-spacing:0.162px;">01 Sep 2024</div>
<div class="t" style="left:1264.70px;top:376px;font-size:19px;color:#33373f;letter-spacing:0.533px;">Logged</div>
<div class="t" style="left:1491.00px;top:376px;font-size:19px;color:#8c8c8c;letter-spacing:-0.452px;">126.75h</div>
<div class="t" style="left:1571.80px;top:376px;font-size:19px;color:#9a88e4;font-weight:bold;letter-spacing:0.911px;">$8,025</div>
<div class="t" style="left:1265.40px;top:415px;font-size:19px;color:#33373f;letter-spacing:0.150px;">Scheduled (billable)</div>
<div class="t" style="left:1463.20px;top:415px;font-size:19px;color:#8c8c8c;letter-spacing:-0.452px;">577.25h</div>
<div class="t" style="left:1543.40px;top:415px;font-size:19px;color:#2bb5a8;font-weight:bold;letter-spacing:0.818px;">$29,652.5</div>
<div class="t" style="left:1264.40px;top:454px;font-size:19px;color:#33373f;letter-spacing:0.402px;">Difference</div>
<div class="t" style="left:1477.30px;top:454px;font-size:19px;color:#8c8c8c;letter-spacing:0.071px;">450.5h</div>
<div class="t" style="left:1549.90px;top:454px;font-size:19px;color:#1d2230;font-weight:bold;">$21,627.5</div>
<div class="t" style="left:277.10px;top:685px;font-size:15px;color:#3b3613;letter-spacing:1.039px;-webkit-text-stroke:0.25px #3b3613;">Scoping</div>
<div class="t" style="left:1483.00px;top:685px;font-size:15px;color:#13284a;letter-spacing:0.822px;-webkit-text-stroke:0.25px #13284a;">Internal Evaluation</div>
<div class="t" style="left:426.20px;top:722px;font-size:15px;color:#4a2814;letter-spacing:1.150px;-webkit-text-stroke:0.25px #4a2814;">Design</div>
<div class="t" style="left:608.50px;top:758px;font-size:15px;color:#3d3715;letter-spacing:0.799px;-webkit-text-stroke:0.25px #3d3715;">Drafts due to Client</div>
<div class="t" style="left:1543.90px;top:758px;font-size:15px;color:#13284a;letter-spacing:0.937px;-webkit-text-stroke:0.25px #13284a;">Planning</div>
<div class="t" style="left:1633.90px;top:758px;font-size:15px;color:#13284a;letter-spacing:0.585px;-webkit-text-stroke:0.25px #13284a;">Release</div>
<div class="t" style="left:1602.00px;top:794px;font-size:15px;color:#13284a;letter-spacing:0.778px;-webkit-text-stroke:0.25px #13284a;">Reserach</div>
<div class="t" style="left:1624.80px;top:831px;font-size:15px;color:#13284a;letter-spacing:1.130px;-webkit-text-stroke:0.25px #13284a;">Design</div>
<div class="t" style="left:192.20px;top:929px;font-size:18px;color:#2a2f3a;letter-spacing:1.109px;">Logged</div>
<div class="t" style="left:194.00px;top:958px;font-size:45px;color:#2f3745;letter-spacing:-0.102px;">$9,425</div>
<div class="t" style="left:344.10px;top:980px;font-size:18px;color:#2a2f3a;letter-spacing:0.041px;">158.75h</div>
<div class="t" style="left:747.20px;top:929px;font-size:18px;color:#2a2f3a;letter-spacing:0.830px;">Scheduled</div>
<div class="t" style="left:747.20px;top:958px;font-size:45px;color:#2f3745;letter-spacing:-1.846px;">$41,937.5</div>
<div class="t" style="left:946.60px;top:980px;font-size:18px;color:#2a2f3a;letter-spacing:0.758px;">849.35h</div>
<div class="t" style="left:1308.90px;top:929px;font-size:18px;color:#2a2f3a;letter-spacing:0.822px;">Difference</div>
<div class="t" style="left:1309.90px;top:958px;font-size:45px;color:#2f3745;letter-spacing:-1.383px;">$32,512.5</div>
<div class="t" style="left:1513.50px;top:980px;font-size:18px;color:#2a2f3a;letter-spacing:0.951px;">690.6h</div>
</body></html>
